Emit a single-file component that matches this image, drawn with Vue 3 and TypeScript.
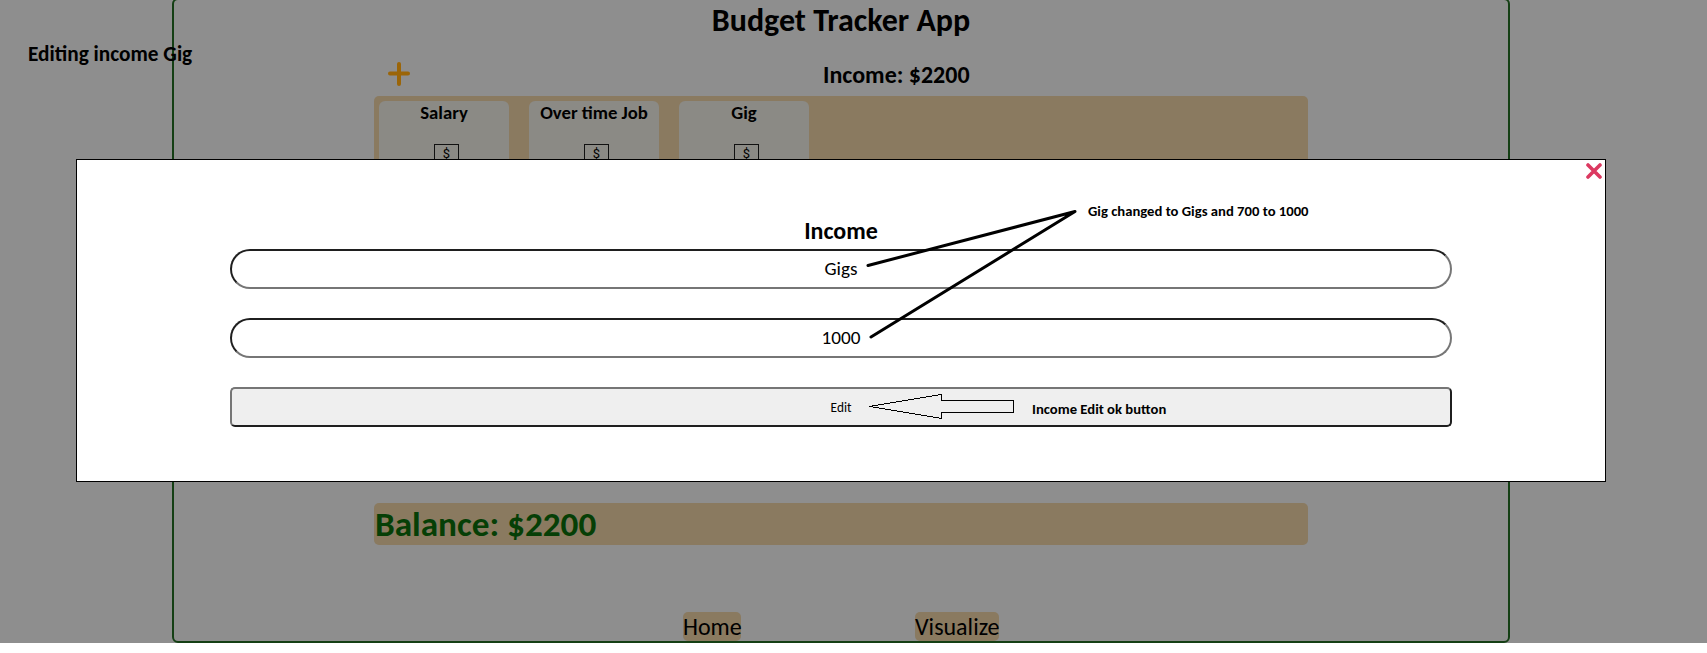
<script setup lang="ts">
const incomes: string[] = ['Salary', 'Over time Job', 'Gig']
</script>

<template>
  <div class="page">
    <main class="app">
      <h1 class="title"><span>Budget Tracker App</span></h1>
      <div class="income-head">
        <svg class="plus" width="22" height="24" viewBox="0 0 22 24">
          <path d="M11 2V22M2 11.5H20" />
        </svg>
        <h2><span>Income: $2200</span></h2>
      </div>
      <section class="panel">
        <article v-for="name in incomes" :key="name" class="card">
          <h3><span>{{ name }}</span></h3>
          <div class="note">$</div>
        </article>
      </section>
      <section class="balance"><span>Balance: $2200</span></section>
      <nav class="links">
        <a class="home"><span>Home</span></a>
        <a class="visual"><span>Visualize</span></a>
      </nav>
    </main>

    <div class="caption"><span>Editing income Gig</span></div>

    <form class="modal" @submit.prevent>
      <svg class="close" width="16" height="16" viewBox="0 0 16 16">
        <path d="M2 2L14 14M14 2L2 14" />
      </svg>
      <h2><span>Income</span></h2>
      <div class="field"><span>Gigs</span></div>
      <div class="field"><span>1000</span></div>
      <button class="submit" type="submit"><span>Edit</span></button>
    </form>

    <svg class="marks" width="1707" height="643" viewBox="0 0 1707 643">
      <path class="pointer" d="M868 265.5L1075 211.5L871 337" />
      <path class="arrow" d="M869.5 406.5L941.5 394.5V400.5H1013.5V412.5H941.5V418.5Z" />
    </svg>
    <div class="label changed"><span>Gig changed to Gigs and 700 to 1000</span></div>
    <div class="label ok"><span>Income Edit ok button</span></div>
  </div>
</template>

<style>
html,
body {
  margin: 0;
  background: #fff;
  overflow: hidden;
}
</style>

<style scoped>
.page {
  position: relative;
  box-sizing: border-box;
  width: 1707px;
  height: 643px;
  overflow: hidden;
  background: #8e8e8e;
  font-family: Carlito, Lato, "Open Sans", sans-serif;
  color: #000;
}
h1,
h2,
h3 {
  margin: 0;
}
span {
  white-space: nowrap;
}
.app {
  box-sizing: border-box;
  width: 1338px;
  height: 645px;
  margin: -2px 0 0 172px;
  border: 2px solid #143f14;
  border-radius: 6px;
  display: flex;
  flex-direction: column;
  align-items: center;
}
.title {
  height: 40px;
  line-height: 42px;
  font-size: 32px;
}
.income-head {
  box-sizing: border-box;
  width: 934px;
  height: 56px;
  padding-top: 11px;
  display: grid;
  grid-template-columns: 449px 1fr;
  align-items: center;
}
.plus {
  margin-left: 14px;
}
.plus path {
  fill: none;
  stroke: #9b6508;
  stroke-width: 4;
  stroke-linecap: round;
}
.income-head h2 {
  font-size: 24px;
  padding-top: 1px;
}
.panel {
  box-sizing: border-box;
  width: 934px;
  height: 380px;
  padding: 5px;
  border-radius: 5px;
  background: #8a7a60;
  display: flex;
  gap: 20px;
}
.card {
  width: 130px;
  height: 150px;
  border-radius: 6px;
  background: #8b8a85;
  display: flex;
  flex-direction: column;
  align-items: center;
}
.card h3 {
  height: 25px;
  line-height: 23px;
  font-size: 18.72px;
}
.note {
  box-sizing: border-box;
  margin: 18px 0 0 5px;
  width: 25px;
  height: 30px;
  border: 1px solid #111;
  font-family: Roboto, sans-serif;
  font-size: 13px;
  line-height: 18px;
  text-align: center;
}
.balance {
  width: 933px;
  padding-left: 1px;
  height: 42px;
  margin-top: 27px;
  border-radius: 5px;
  background: #8a7a60;
  color: #063f06;
  font-size: 35.2px;
  font-weight: 700;
  line-height: 41px;
}
.links {
  width: 934px;
  margin-top: 67px;
  display: flex;
}
.links a {
  height: 29px;
  border-radius: 5px;
  background: #8a7a60;
  font-size: 24px;
  line-height: 30px;
}
.home {
  width: 58px;
  margin-left: 309px;
}
.visual {
  width: 84px;
  margin-left: 174px;
}
.caption {
  position: absolute;
  left: 28px;
  top: 42px;
  font-size: 21.3px;
  line-height: 25px;
  font-weight: 700;
}
.modal {
  position: absolute;
  left: 76px;
  top: 159px;
  box-sizing: border-box;
  width: 1530px;
  height: 323px;
  padding: 59px 153px 0;
  border: 1px solid #000;
  background: #fff;
  display: flex;
  flex-direction: column;
}
.modal h2 {
  height: 30px;
  line-height: 24px;
  font-size: 24px;
  text-align: center;
}
.field,
.submit {
  box-sizing: border-box;
  height: 40px;
  margin-bottom: 29px;
  text-align: center;
  font-family: inherit;
}
.field {
  border: 2px solid;
  border-color: #1f1f1f #767676 #767676 #1f1f1f;
  border-radius: 20px;
  font-size: 19.2px;
  line-height: 36px;
}
.submit {
  padding: 0;
  border: 2px solid;
  border-color: #767676 #1f1f1f #1f1f1f #767676;
  border-radius: 5px;
  background: #efefef;
  color: #000;
  font-size: 13.333px;
}
.close {
  position: absolute;
  right: 3px;
  top: 3px;
}
.close path {
  fill: none;
  stroke: #dc3961;
  stroke-width: 3.6;
  stroke-linecap: round;
}
.marks {
  position: absolute;
  left: 0;
  top: 0;
}
.marks path {
  fill: none;
  stroke: #000;
}
.marks .pointer {
  stroke-width: 3;
  stroke-linecap: round;
  stroke-linejoin: round;
}
.marks .arrow {
  stroke-width: 1;
  shape-rendering: crispEdges;
}
.label {
  position: absolute;
  font-size: 14.667px;
  line-height: 18px;
  font-weight: 700;
}
.changed {
  left: 1088px;
  top: 202px;
}
.ok {
  left: 1032px;
  top: 400px;
}
</style>
